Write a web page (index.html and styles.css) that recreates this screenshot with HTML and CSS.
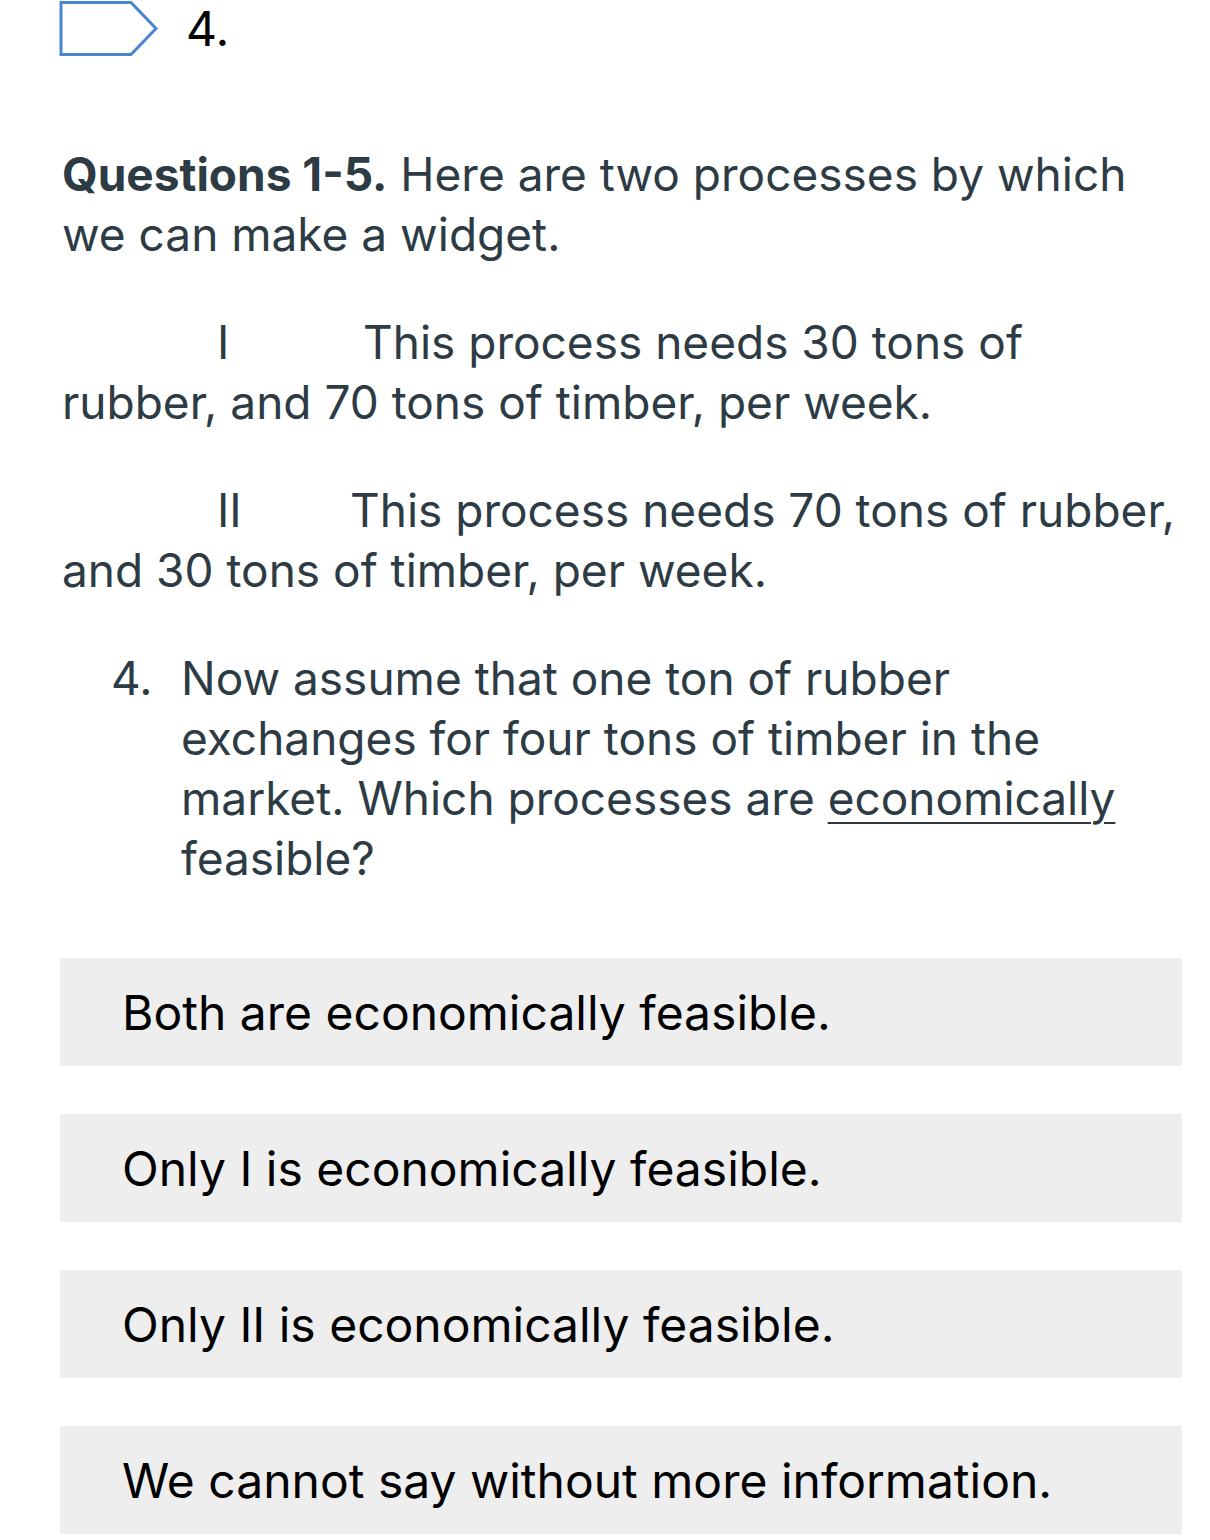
FILE: index.html
```html
<!DOCTYPE html>
<html lang="en">
<head>
<meta charset="utf-8">
<link rel="stylesheet" href="styles.css">
</head>
<body>
<div class="page">
  <header class="qhead">
    <svg class="flag" width="100" height="58" viewBox="0 0 100 58" aria-hidden="true">
      <polygon points="2,2.5 72,2.5 97,28.5 72,54.5 2,54.5" fill="none" stroke="#4a86cf" stroke-width="3" stroke-linejoin="miter"/>
    </svg>
    <span class="qnum">4.</span>
  </header>

  <div class="qtext">
    <p><strong>Questions 1-5.</strong> Here are two processes by which we can make a widget.</p>
    <p class="proc"><span class="roman r1">I</span>This process needs 30 tons of rubber, and 70 tons of timber, per week.</p>
    <p class="proc"><span class="roman r2">II</span>This process needs 70 tons of rubber, and 30 tons of timber, per week.</p>
    <div class="item">
      <span class="inum">4.</span>
      <p class="itext">Now assume that one ton of rubber exchanges for four tons of timber in the market. Which processes are <u>economically</u> feasible?</p>
    </div>
  </div>

  <div class="answers">
    <div class="answer">Both are economically feasible.</div>
    <div class="answer">Only I is economically feasible.</div>
    <div class="answer">Only II is economically feasible.</div>
    <div class="answer">We cannot say without more information.</div>
  </div>
</div>
</body>
</html>
```

FILE: styles.css
```css
html, body {
  margin: 0;
  padding: 0;
  background: #ffffff;
}

body {
  font-family: "Inter", "Roboto", "Liberation Sans", sans-serif;
  -webkit-font-smoothing: antialiased;
}

.page {
  width: 1210px;
}

.qhead {
  display: flex;
  align-items: center;
  height: 57px;
  padding-left: 59px;
}

.flag {
  display: block;
  flex: none;
}

.qnum {
  margin-left: 27px;
  font-size: 48px;
  color: #000000;
  line-height: 57px;
}

.qtext {
  margin-top: 87px;
  padding-left: 62px;
  width: 1120px;
  color: #2d3b45;
  font-size: 46px;
  line-height: 60px;
}

.qtext p {
  margin: 0 0 48px 0;
}

.qtext strong {
  font-weight: 700;
}

.roman {
  display: inline-block;
}

.r1 {
  margin-left: 155px;
  width: 146px;
}

.r2 {
  margin-left: 155px;
  width: 133px;
}

.item {
  display: flex;
}

.inum {
  flex: none;
  width: 70px;
  padding-left: 49px;
}

.qtext .itext {
  margin: 0;
}

.itext u {
  text-decoration-thickness: 2px;
  text-underline-offset: 7px;
}

.answers {
  margin-top: 70px;
  margin-left: 60px;
  width: 1122px;
  display: flex;
  flex-direction: column;
  gap: 48px;
}

.answer {
  height: 108px;
  box-sizing: border-box;
  background: #eeeeee;
  padding-left: 62px;
  display: flex;
  align-items: center;
  font-size: 48px;
  color: #000000;
}
```
